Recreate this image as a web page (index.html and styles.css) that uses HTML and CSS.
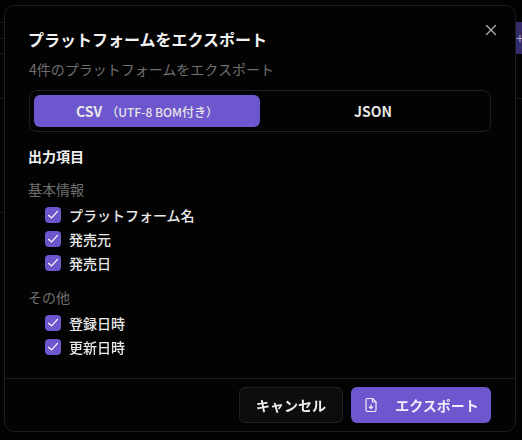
FILE: index.html
```html
<!DOCTYPE html>
<html lang="ja">
<head>
  <meta charset="UTF-8" />
  <meta name="viewport" content="width=device-width, initial-scale=1.0">
  <title>プラットフォームをエクスポート</title>
  <link rel="stylesheet" href="styles.css">
</head>
<body>
  <div class="backdrop">
    <div class="bg-add">+</div>
    <div class="bg-line line-a"></div>
    <div class="bg-line line-b"></div>
    <div class="bg-line line-c"></div>
    <div class="bg-line line-d"></div>
    <div class="bg-line line-e"></div>
    <div class="bg-line line-f"></div>
  </div>

  <div class="modal">
    <button class="close-btn" aria-label="閉じる">
      <svg width="16" height="16" viewBox="0 0 16 16" fill="none" stroke="currentColor" stroke-width="1.2" stroke-linecap="round">
        <path d="M3.5 3.5l9 9M12.5 3.5l-9 9" />
      </svg>
    </button>

    <div class="modal-body">
      <h2 class="title">プラットフォームをエクスポート</h2>
      <p class="subtitle">4件のプラットフォームをエクスポート</p>

      <div class="tabs">
        <div class="tab active">CSV<small>（UTF-8 BOM付き）</small></div>
        <div class="tab">JSON</div>
      </div>

      <h3 class="section-title">出力項目</h3>

      <div class="group">
        <div class="group-label">基本情報</div>
        <label class="check"><span class="box"><svg width="16" height="16" viewBox="0 0 16 16" fill="none" stroke="#fff" stroke-width="1.2" stroke-linecap="round" stroke-linejoin="round"><path d="M3.5 8.3l3 2.6 6-6.6" /></svg></span>プラットフォーム名</label>
        <label class="check"><span class="box"><svg width="16" height="16" viewBox="0 0 16 16" fill="none" stroke="#fff" stroke-width="1.2" stroke-linecap="round" stroke-linejoin="round"><path d="M3.5 8.3l3 2.6 6-6.6" /></svg></span>発売元</label>
        <label class="check"><span class="box"><svg width="16" height="16" viewBox="0 0 16 16" fill="none" stroke="#fff" stroke-width="1.2" stroke-linecap="round" stroke-linejoin="round"><path d="M3.5 8.3l3 2.6 6-6.6" /></svg></span>発売日</label>
      </div>

      <div class="group">
        <div class="group-label">その他</div>
        <label class="check"><span class="box"><svg width="16" height="16" viewBox="0 0 16 16" fill="none" stroke="#fff" stroke-width="1.2" stroke-linecap="round" stroke-linejoin="round"><path d="M3.5 8.3l3 2.6 6-6.6" /></svg></span>登録日時</label>
        <label class="check"><span class="box"><svg width="16" height="16" viewBox="0 0 16 16" fill="none" stroke="#fff" stroke-width="1.2" stroke-linecap="round" stroke-linejoin="round"><path d="M3.5 8.3l3 2.6 6-6.6" /></svg></span>更新日時</label>
      </div>
    </div>

    <div class="modal-footer">
      <button class="btn btn-cancel">キャンセル</button>
      <button class="btn btn-export">
        <svg width="16" height="16" viewBox="0 0 16 16" fill="none" stroke="currentColor" stroke-width="1.2" stroke-linecap="round" stroke-linejoin="round">
          <path d="M9.5 1.5H4.5a1.5 1.5 0 0 0-1.5 1.5v10a1.5 1.5 0 0 0 1.5 1.5h7a1.5 1.5 0 0 0 1.5-1.5V5z" />
          <path d="M9.5 1.5V5H13" />
          <path d="M8 7.5v4M6.2 9.8L8 11.6l1.8-1.8" />
        </svg>
        エクスポート
      </button>
    </div>
  </div>
</body>
</html>
```

FILE: styles.css
```css
* {
  box-sizing: border-box;
}

html, body {
  height: 100%;
}

body {
  margin: 0;
  background: #020202;
  color: #f2f2f2;
  font-family: "Noto Sans CJK JP", "Noto Sans", sans-serif;
  overflow: hidden;
}

.backdrop {
  position: fixed;
  inset: 0;
}

.bg-add {
  position: absolute;
  left: 516px;
  top: 22px;
  width: 6px;
  height: 32px;
  overflow: hidden;
  background: #352c6b;
  color: #a9a5c4;
  font-size: 14px;
  line-height: 32px;
}

.bg-line {
  position: absolute;
  height: 1px;
  background: #17181a;
}

.line-a { left: 0; width: 5px; top: 22px; }
.line-b { left: 0; width: 5px; top: 38px; }
.line-c { left: 0; width: 5px; top: 53px; }
.line-d { left: 0; width: 5px; top: 98px; }
.line-e { left: 0; width: 5px; top: 212px; }
.line-f { left: 516px; width: 6px; top: 98px; }

.modal {
  position: fixed;
  left: 4px;
  top: 5px;
  width: 512px;
  height: 427px;
  display: flex;
  flex-direction: column;
  background: #030303;
  border: 1px solid #1c1d1f;
  border-radius: 10px;
}

.close-btn {
  position: absolute;
  top: 16px;
  right: 16px;
  padding: 0;
  width: 16px;
  height: 16px;
  display: flex;
  background: none;
  border: none;
  color: #b4b4b4;
}

.modal-body {
  flex: 1;
  padding: 21px 24px 0;
}

.title {
  margin: 0 0 0 -1px;
  font-size: 16px;
  font-weight: 700;
  line-height: 24px;
}

.subtitle {
  margin: 8px 0 0;
  font-size: 14px;
  line-height: 20px;
  color: #707070;
}

.tabs {
  display: flex;
  margin-top: 11px;
  height: 42px;
  padding: 4px;
  border: 1px solid #1f2022;
  border-radius: 8px;
}

.tab {
  flex: 1;
  display: flex;
  align-items: center;
  justify-content: center;
  border-radius: 6px;
  font-size: 14px;
  font-weight: 700;
  color: #e6e6e6;
}

.tab.active {
  background: #6e56cf;
}

.tab small {
  margin-left: 4px;
  font-size: 12px;
  font-weight: 500;
}

.section-title {
  margin: 13px 0 0 -1px;
  font-size: 14px;
  font-weight: 700;
  line-height: 22px;
}

.group {
  margin-top: 12px;
}

.group-label {
  margin-left: -1px;
  font-size: 14px;
  line-height: 20px;
  color: #707070;
  margin-bottom: 4px;
}

.check {
  display: flex;
  align-items: center;
  gap: 8px;
  height: 24px;
  padding-left: 16px;
  font-size: 14px;
  font-weight: 500;
  color: #e8e8e8;
}

.box {
  width: 16px;
  height: 16px;
  display: flex;
  background: #6e56cf;
  border-radius: 4px;
}

.modal-footer {
  display: flex;
  justify-content: flex-end;
  gap: 8px;
  height: 53px;
  padding: 8px 24px 0;
  border-top: 1px solid #1c1d1f;
}

.btn {
  height: 36px;
  display: flex;
  align-items: center;
  justify-content: center;
  border-radius: 6px;
  font-family: inherit;
  font-size: 14px;
  font-weight: 700;
}

.btn-cancel {
  width: 104px;
  background: #0c0d0e;
  border: 1px solid #1f2022;
  color: #f0f0f0;
}

.btn-export {
  width: 140px;
  gap: 16px;
  background: #6e56cf;
  border: none;
  color: #f0eefa;
}
```
